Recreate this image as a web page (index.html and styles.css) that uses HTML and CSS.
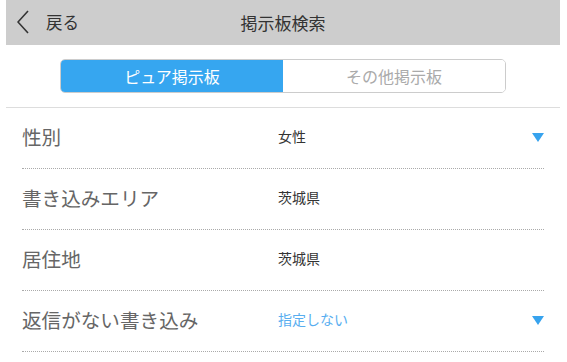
FILE: index.html
```html
<!DOCTYPE html>
<html lang="ja">
  <head>
    <meta charset="UTF-8" />
    <meta name="viewport" content="width=device-width, initial-scale=1.0" />
    <title>掲示板検索</title>
    <link rel="stylesheet" href="styles.css">
  </head>
  <body>
    <div class="page">
      <!-- Header -->
      <div class="header">
        <a class="back" href="#">
          <svg class="back-icon" width="12" height="24" viewBox="0 0 12 24">
            <polyline points="11,1 1,12 11,23" fill="none" stroke="#333" stroke-width="1.6" />
          </svg>
          <span>戻る</span>
        </a>
        <h1 class="title">掲示板検索</h1>
      </div>

      <!-- Tabs -->
      <div class="tabs-wrap">
        <div class="tabs">
          <button class="tab active">ピュア掲示板</button>
          <button class="tab">その他掲示板</button>
        </div>
      </div>

      <!-- Search form -->
      <ul class="rows">
        <li class="row">
          <span class="label">性別</span>
          <span class="value">女性</span>
          <span class="arrow"></span>
        </li>
        <li class="row">
          <span class="label">書き込みエリア</span>
          <span class="value">茨城県</span>
        </li>
        <li class="row">
          <span class="label">居住地</span>
          <span class="value">茨城県</span>
        </li>
        <li class="row">
          <span class="label">返信がない書き込み</span>
          <span class="value blue">指定しない</span>
          <span class="arrow"></span>
        </li>
      </ul>
    </div>
  </body>
</html>
```

FILE: styles.css
```css
body {
  margin: 0;
  background-color: white;
  font-family: "Noto Sans CJK JP", "Noto Sans", sans-serif;
  color: #333;
}
.page {
  margin: 0 7px 0 6px;
}
.header {
  position: relative;
  height: 45px;
  background-color: #cdcdcd;
  display: flex;
  align-items: center;
  justify-content: center;
}
.back {
  position: absolute;
  left: 11px;
  top: 10px;
  display: flex;
  align-items: center;
  gap: 17px;
  color: #333;
  text-decoration: none;
  font-size: 16.5px;
}
.title {
  margin: 0;
  font-size: 17px;
  font-weight: normal;
  color: #333;
}
.tabs-wrap {
  padding: 14px 0 14px 0;
  border-bottom: 1px solid #ddd;
}
.tabs {
  display: flex;
  margin-left: 54px;
  width: 446px;
  height: 34px;
  border: 1px solid #ccc;
  border-radius: 5px;
  overflow: hidden;
  box-sizing: border-box;
}
.tab {
  flex: 1;
  border: none;
  background-color: white;
  color: #aaa;
  font-family: inherit;
  font-size: 16px;
  padding: 0;
  cursor: pointer;
}
.tab.active {
  background-color: #36a6f0; /* Blue tab */
  color: white;
}
.rows {
  list-style: none;
  margin: 0;
  padding: 0 16px 0 16px;
}
.row {
  display: flex;
  align-items: center;
  height: 61px;
  padding-bottom: 4px;
  border-bottom: 1px dotted #aaa;
  box-sizing: border-box;
}
.label {
  width: 256px;
  font-size: 19.6px;
  color: #666;
}
.value {
  flex: 1;
  font-size: 14px;
  color: #333;
}
.value.blue {
  color: #58aef0;
}
.arrow {
  width: 0;
  height: 0;
  margin-top: 2px;
  border-left: 6.5px solid transparent;
  border-right: 6.5px solid transparent;
  border-top: 9px solid #37a3ee;
}
```
